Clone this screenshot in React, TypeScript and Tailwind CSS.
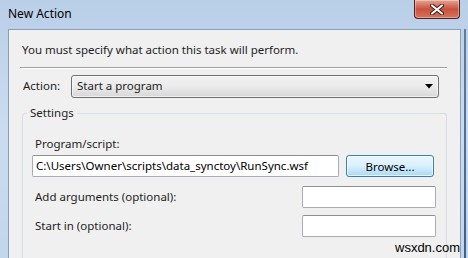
import type { ReactNode } from "react";

const ui = { fontFamily: '"Noto Sans", "Open Sans", sans-serif' };

function TextBox({ value, className }: { value?: string; className: string }) {
  return (
    <div
      className={`flex items-center rounded-[2px] border border-[#abadb3] border-t-[#8e8f8f] bg-white px-[3px] text-[11.5px] text-black ${className}`}
    >
      {value}
    </div>
  );
}

function Row({ label, children, className }: { label: string; children: ReactNode; className: string }) {
  return (
    <div className={`flex items-center justify-between ${className}`}>
      <span className="pl-[3px]">{label}</span>
      {children}
    </div>
  );
}

export default function App() {
  return (
    <div
      className="relative flex h-[258px] w-[468px] flex-col overflow-hidden bg-gradient-to-b from-[#b9cfe8] via-[#cbdcef] to-[#c2d6ec] text-[11.5px] text-[#1e1e1e]"
      style={ui}
    >
      {/* title bar */}
      <div className="flex h-[29px] shrink-0 items-start justify-between">
        <span className="pl-[8px] pt-[6px] text-[12px] leading-[16px] text-black">New Action</span>
        <button
          type="button"
          className="mr-[8px] flex h-[19px] w-[46px] items-center justify-center rounded-b-[4px] border border-t-0 border-[#4c2320] bg-gradient-to-b from-[#e5a494] via-[#c9513d] to-[#d6735b] shadow-[inset_0_0_0_1px_rgba(255,255,255,0.35)]"
        >
          <svg width="14" height="11" viewBox="0 0 14 11">
            <path d="M2 1.5 L12 9.5 M12 1.5 L2 9.5" stroke="#3b1a16" strokeWidth="4" strokeLinecap="round" />
            <path d="M2 1.5 L12 9.5 M12 1.5 L2 9.5" stroke="#fff" strokeWidth="2.2" strokeLinecap="round" />
          </svg>
        </button>
      </div>

      <div className="flex min-h-0 flex-1">
        <div className="w-[8px] shrink-0" />
        {/* client area */}
        <div className="flex w-[453px] shrink-0 flex-col border border-b-0 border-[#8a9fb6] bg-[#f0f0f0]">
          <p className="pl-[13px] pt-[11px] leading-[17px]">You must specify what action this task will perform.</p>
          <div className="ml-[11px] mt-[9px] h-[2px] w-[427px] border-t border-b border-t-[#a0a0a0] border-b-white" />

          <div className="mt-[5px] flex h-[24px] items-center pl-[14px]">
            <span className="w-[48px]">Action:</span>
            <div className="flex h-[23px] w-[368px] items-center justify-between rounded-[3px] border border-[#707070] bg-gradient-to-b from-[#f2f2f2] via-[#ebebeb] to-[#d7d7d7] pl-[5px] pr-[5px] shadow-[inset_0_0_0_1px_rgba(255,255,255,0.6)]">
              <span>Start a program</span>
              <svg width="8" height="5" viewBox="0 0 8 5">
                <path d="M0 0 H8 L4 4.5 Z" fill="#000" />
              </svg>
            </div>
          </div>

          {/* settings group */}
          <div className="relative ml-[13px] mt-[15px] flex w-[425px] flex-1 flex-col rounded-t-[3px] border border-b-0 border-[#d5dfe5] px-[9px]">
            <span className="absolute -top-[9px] left-[4px] bg-[#f0f0f0] px-[3px] leading-[16px]">Settings</span>
            <span className="pl-[3px] pt-[21px] leading-[17px]">Program/script:</span>
            <div className="mt-[3px] flex items-center">
              <TextBox value={"C:\\Users\\Owner\\scripts\\data_synctoy\\RunSync.wsf"} className="h-[22px] w-[307px]" />
              <button
                type="button"
                className="ml-[7px] h-[22px] w-[88px] rounded-[3px] border border-[#3c7fb1] bg-gradient-to-b from-[#eaf6fd] via-[#d9f0fc] to-[#a7d9f5] pt-px text-[11.5px] text-black shadow-[inset_0_0_0_1px_rgba(255,255,255,0.7)]"
              >
                Browse...
              </button>
            </div>
            <Row label="Add arguments (optional):" className="mt-[9px] pr-[1px]">
              <TextBox className="h-[22px] w-[134px]" />
            </Row>
            <Row label="Start in (optional):" className="mt-[7px] pr-[1px]">
              <TextBox className="h-[22px] w-[134px]" />
            </Row>
          </div>
        </div>
        <div className="flex flex-1 justify-center">
          <div className="ml-[1px] w-[2px] bg-gradient-to-b from-[#5f7d9f] to-[#3e5f86]" />
        </div>
      </div>

      <span
        className="absolute left-[395px] top-[240px] text-[13px] leading-[16px] text-black"
        style={{ fontFamily: '"Liberation Sans", Arial, sans-serif' }}
      >
        wsxdn.com
      </span>
    </div>
  );
}
